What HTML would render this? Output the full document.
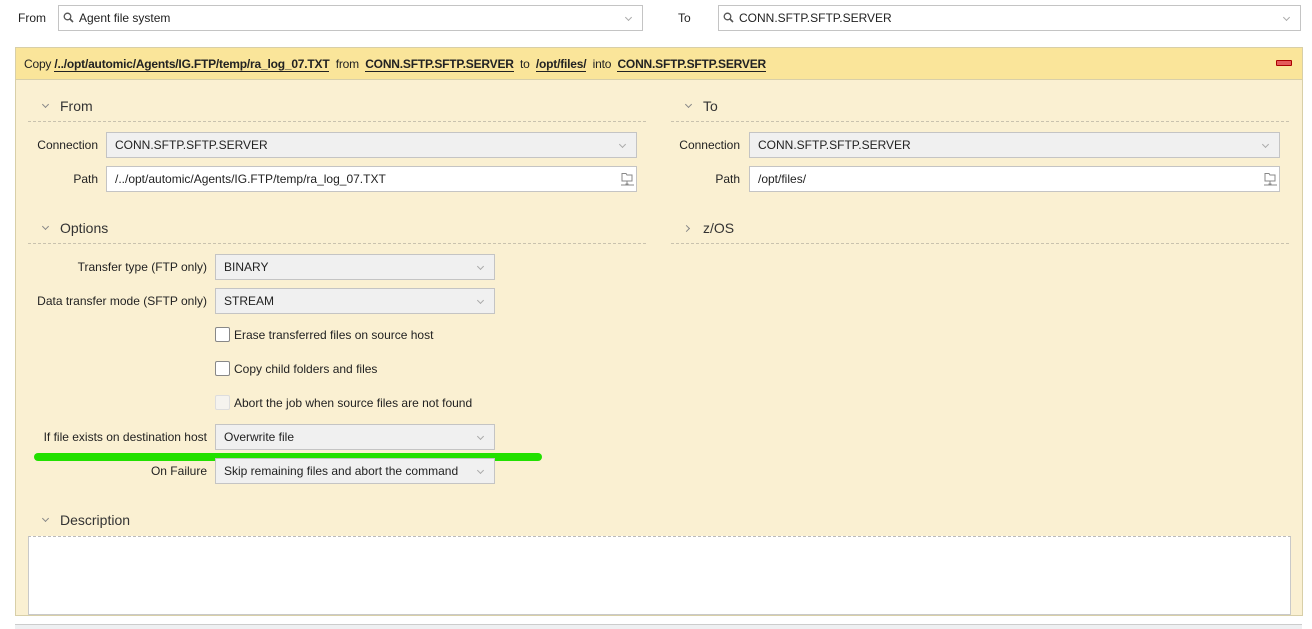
<!DOCTYPE html>
<html><head><style>
body{margin:0;width:1312px;height:628px;background:#fff;font-family:"Liberation Sans",Arial,sans-serif;font-size:12px;color:#222;position:relative;overflow:hidden}
.a{position:absolute}
.box{position:absolute;border:1px solid #c4c4c4;background:#fff;box-sizing:border-box;height:26px;line-height:24px;padding-left:8px;white-space:nowrap}
.sel{background:#f0f0f0}
.chev{position:absolute;right:11px;top:9px;width:4px;height:4px;border-right:1px solid #aaa;border-bottom:1px solid #aaa;transform:rotate(45deg)}
.lbl{position:absolute;text-align:right;white-space:nowrap}
.sec{position:absolute;font-size:14px;color:#333}
.sec i{position:absolute;left:-17px;top:4px;width:4px;height:4px;border-right:1px solid #888;border-bottom:1px solid #888;transform:rotate(45deg)}
.sec i.r{transform:rotate(-45deg);top:6px;left:-19px}
.dash{position:absolute;border-top:1px dashed #c9c2ae;height:0}
.cb{position:absolute;width:13px;height:13px;border:1px solid #888;border-radius:2px;background:#fff}
u{font-weight:bold;text-decoration:none;border-bottom:1px solid #222}
</style></head><body>
<div class="a" style="left:18px;top:11px">From</div>
<div class="box" style="left:58px;top:5px;width:585px;padding-left:20px">Agent file system<div class="chev"></div></div>
<svg class="a" style="left:63px;top:12px" width="12" height="12"><circle cx="4.5" cy="4.5" r="3.3" fill="none" stroke="#555" stroke-width="1.3"/><line x1="7" y1="7" x2="10" y2="10" stroke="#555" stroke-width="1.6"/></svg>
<div class="a" style="left:678px;top:11px">To</div>
<div class="box" style="left:718px;top:5px;width:583px;padding-left:20px">CONN.SFTP.SFTP.SERVER<div class="chev"></div></div>
<svg class="a" style="left:723px;top:12px" width="12" height="12"><circle cx="4.5" cy="4.5" r="3.3" fill="none" stroke="#555" stroke-width="1.3"/><line x1="7" y1="7" x2="10" y2="10" stroke="#555" stroke-width="1.6"/></svg>

<div class="a" style="left:15px;top:47px;width:1286px;height:567px;border:1px solid #d8cfa8;background:#faf0d2"></div>
<div class="a" style="left:16px;top:48px;width:1286px;height:31px;background:#fae59a;border-bottom:1px solid #d8cfa8"></div>
<div class="a" style="left:24px;top:57px;white-space:nowrap;letter-spacing:-0.2px">Copy <u>/../opt/automic/Agents/IG.FTP/temp/ra_log_07.TXT</u> &nbsp;from &nbsp;<u>CONN.SFTP.SFTP.SERVER</u> &nbsp;to &nbsp;<u>/opt/files/</u> &nbsp;into &nbsp;<u>CONN.SFTP.SFTP.SERVER</u></div>
<div class="a" style="left:1276px;top:60px;width:14px;height:4px;background:#e45a5a;border:1px solid #a00;border-radius:1px"></div>

<div class="sec" style="left:60px;top:98px"><i></i>From</div>
<div class="dash" style="left:28px;top:121px;width:618px"></div>
<div class="lbl" style="right:1214px;top:138px">Connection</div>
<div class="box sel" style="left:106px;top:132px;width:531px">CONN.SFTP.SFTP.SERVER<div class="chev"></div></div>
<div class="lbl" style="right:1214px;top:172px">Path</div>
<div class="box" style="left:106px;top:166px;width:531px">/../opt/automic/Agents/IG.FTP/temp/ra_log_07.TXT</div>
<svg class="a" style="left:620px;top:172px" width="15" height="15"><path d="M2 1.5h4l1 1.5h5v6H2z" fill="none" stroke="#888"/><path d="M7 9v3M1 13h13" stroke="#888"/><rect x="5.5" y="11.5" width="3" height="2" fill="#888"/></svg>

<div class="sec" style="left:703px;top:98px"><i></i>To</div>
<div class="dash" style="left:671px;top:121px;width:618px"></div>
<div class="lbl" style="right:572px;top:138px">Connection</div>
<div class="box sel" style="left:749px;top:132px;width:531px">CONN.SFTP.SFTP.SERVER<div class="chev"></div></div>
<div class="lbl" style="right:572px;top:172px">Path</div>
<div class="box" style="left:749px;top:166px;width:531px">/opt/files/</div>
<svg class="a" style="left:1263px;top:172px" width="15" height="15"><path d="M2 1.5h4l1 1.5h5v6H2z" fill="none" stroke="#888"/><path d="M7 9v3M1 13h13" stroke="#888"/><rect x="5.5" y="11.5" width="3" height="2" fill="#888"/></svg>

<div class="sec" style="left:60px;top:220px"><i></i>Options</div>
<div class="dash" style="left:28px;top:243px;width:618px"></div>
<div class="sec" style="left:703px;top:220px"><i class="r"></i>z/OS</div>
<div class="dash" style="left:671px;top:243px;width:618px"></div>

<div class="lbl" style="right:1105px;top:260px">Transfer type (FTP only)</div>
<div class="box sel" style="left:215px;top:254px;width:280px">BINARY<div class="chev"></div></div>
<div class="lbl" style="right:1105px;top:294px">Data transfer mode (SFTP only)</div>
<div class="box sel" style="left:215px;top:288px;width:280px">STREAM<div class="chev"></div></div>
<div class="cb" style="left:215px;top:327px"></div><div class="a" style="left:234px;top:328px">Erase transferred files on source host</div>
<div class="cb" style="left:215px;top:361px"></div><div class="a" style="left:234px;top:362px">Copy child folders and files</div>
<div class="cb" style="left:215px;top:395px;border-color:#ddd;background:#f5f3ee"></div><div class="a" style="left:234px;top:396px">Abort the job when source files are not found</div>
<div class="lbl" style="right:1105px;top:430px">If file exists on destination host</div>
<div class="box sel" style="left:215px;top:424px;width:280px">Overwrite file<div class="chev"></div></div>
<div class="a" style="left:34px;top:453px;width:508px;height:8px;background:#22e000;border-radius:4px"></div>
<div class="lbl" style="right:1105px;top:464px">On Failure</div>
<div class="box sel" style="left:215px;top:458px;width:280px">Skip remaining files and abort the command<div class="chev"></div></div>

<div class="sec" style="left:60px;top:512px"><i></i>Description</div>
<div class="a" style="left:28px;top:536px;width:1261px;height:77px;background:#fff;border:1px solid #c9c9c9;border-top:1px dashed #bbb"></div>
<div class="a" style="left:15px;top:624px;width:1287px;height:4px;background:#eef0f2;border-top:1px solid #ccc"></div>
</body></html>
